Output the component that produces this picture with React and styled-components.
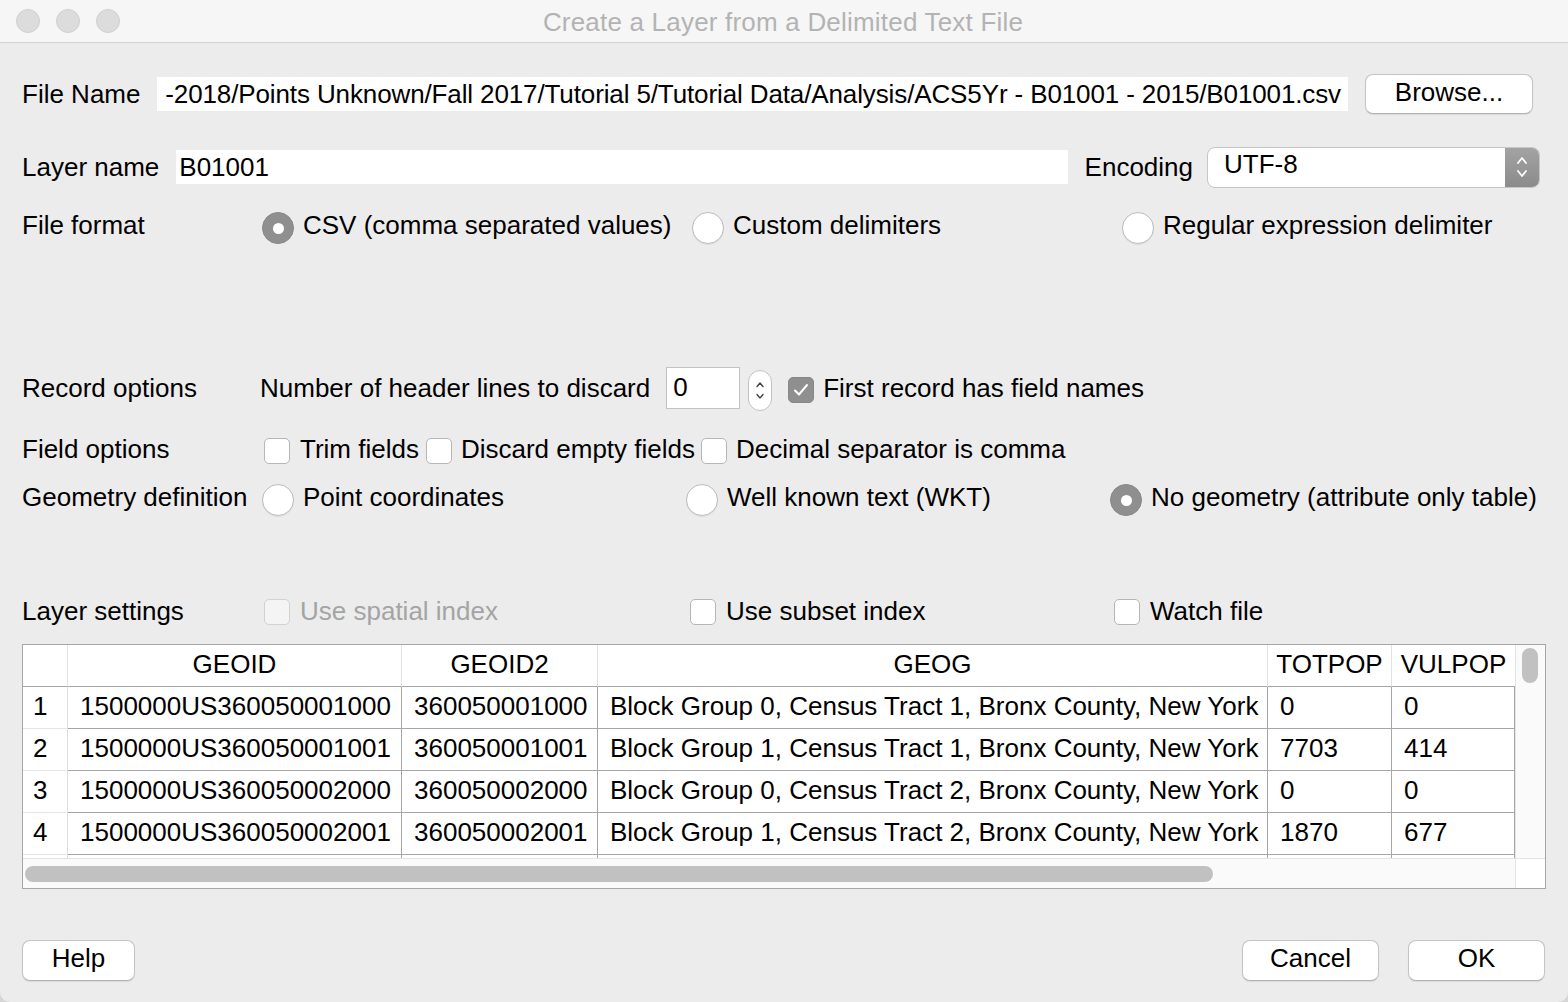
import React from "react";
import styled, { createGlobalStyle } from "styled-components";

const GlobalStyle = createGlobalStyle`
  html, body {
    margin: 0;
    padding: 0;
    background: #d6d6d6;
  }
  body {
    font-family: "Liberation Sans", Arial, sans-serif;
    font-size: 26px;
    color: #000;
  }
  * {
    box-sizing: border-box;
  }
`;

const Window = styled.div`
  width: 1568px;
  height: 1002px;
  background: #ececec;
  display: flex;
  flex-direction: column;
  border-radius: 0 0 10px 10px;
  overflow: hidden;
`;

const TitleBar = styled.div`
  height: 43px;
  flex-shrink: 0;
  background: #f6f6f6;
  border-bottom: 1px solid #d2d2d2;
  display: grid;
  grid-template-columns: 1fr auto 1fr;
  align-items: center;
`;
const Lights = styled.div`
  display: flex;
  gap: 16px;
  padding-left: 16px;
`;
const Light = styled.span`
  width: 24px;
  height: 24px;
  border-radius: 50%;
  background: #dcdcdc;
  border: 1px solid #d0d0d0;
`;
const Title = styled.div`
  color: #b3b3b3;
  line-height: 30px;
  letter-spacing: 0.2px;
  padding: 2px 2px 0 0;
`;

const Content = styled.div`
  padding: 31px 22px 0;
  display: flex;
  flex-direction: column;
`;

const Row = styled.div`
  display: flex;
  align-items: center;
  height: ${(p) => p.$h}px;
  margin-top: ${(p) => p.$mt || 0}px;
  gap: ${(p) => p.$gap || 0}px;
  white-space: nowrap;
  flex-shrink: 0;
`;

const Label = styled.span`
  flex-shrink: 0;
  width: ${(p) => (p.$w ? `${p.$w}px` : "auto")};
  line-height: 30px;
`;

const TextField = styled.div`
  flex: 1;
  min-width: 0;
  height: 34px;
  background: #fff;
  display: flex;
  align-items: center;
  justify-content: ${(p) => (p.$tail ? "flex-end" : "flex-start")};
  padding: ${(p) => (p.$tail ? "0 7px 0 0" : "0 0 0 3px")};
  letter-spacing: ${(p) => (p.$tail ? "-0.12px" : "normal")};
  overflow: hidden;
  white-space: nowrap;
`;

const PushButton = styled.button`
  width: ${(p) => p.$w}px;
  height: ${(p) => p.$h || 41}px;
  flex-shrink: 0;
  background: #fff;
  border: 1px solid #c4c4c4;
  border-bottom-color: #b2b2b2;
  border-radius: 8px;
  box-shadow: 0 1px 1px rgba(0, 0, 0, 0.08);
  font-family: inherit;
  font-size: 26px;
  color: #000;
  padding: 0 0 4px;
  margin-right: ${(p) => p.$mr || 0}px;
`;

const Combo = styled.div`
  width: 333px;
  height: 41px;
  flex-shrink: 0;
  display: flex;
  background: #fff;
  border: 1px solid #c6c6c6;
  border-radius: 8px;
  margin: 0 6px 0 -3px;
  overflow: hidden;
`;
const ComboText = styled.div`
  flex: 1;
  padding: 0 0 5px 16px;
  display: flex;
  align-items: center;
`;
const ComboArrow = styled.div`
  width: 34px;
  background: linear-gradient(#a3a3a3, #8b8b8b);
  display: flex;
  align-items: center;
  justify-content: center;
`;

const OptionGrid = styled.div`
  flex: 1;
  display: grid;
  grid-template-columns: ${(p) => p.$cols};
  align-items: center;
`;

const Option = styled.div`
  display: flex;
  align-items: center;
  gap: ${(p) => p.$gap || 9}px;
  margin-left: ${(p) => p.$ml || 0}px;
  margin-right: ${(p) => p.$mr || 0}px;
`;

const Radio = styled.span`
  width: 32px;
  height: 32px;
  flex-shrink: 0;
  margin-top: 6px;
  border-radius: 50%;
  background: ${(p) => (p.$on ? "#8f8f8f" : "#fff")};
  border: 1px solid ${(p) => (p.$on ? "#888" : "#bcbcbc")};
  box-shadow: ${(p) => (p.$on ? "none" : "0 1px 1px rgba(0,0,0,0.06)")};
  display: flex;
  align-items: center;
  justify-content: center;
  &::after {
    content: "";
    display: ${(p) => (p.$on ? "block" : "none")};
    width: 11px;
    height: 11px;
    border-radius: 50%;
    background: #fff;
  }
`;

const Box = styled.span`
  width: 26px;
  height: 26px;
  flex-shrink: 0;
  margin-top: ${(p) => p.$mt || 0}px;
  border-radius: 5px;
  background: ${(p) => (p.$on ? "#8f8f8f" : p.$off ? "#f4f4f4" : "#fff")};
  border: 1px solid ${(p) => (p.$on ? "#888" : p.$off ? "#d2d2d2" : "#b6b6b6")};
  display: flex;
  align-items: center;
  justify-content: center;
`;

const Text = styled.span`
  line-height: 30px;
  color: ${(p) => (p.$muted ? "#a4a4a4" : "#000")};
`;

const SpinBox = styled.div`
  width: 74px;
  height: 42px;
  flex-shrink: 0;
  background: #fff;
  border: 1px solid #c3c3c3;
  display: flex;
  align-items: center;
  padding: 0 0 2px 6px;
`;
const Stepper = styled.div`
  width: 24px;
  height: 41px;
  flex-shrink: 0;
  margin: 4px 0 0 -8px;
  border: 1px solid #c3c3c3;
  border-radius: 12px;
  background: #fff;
  display: flex;
  flex-direction: column;
  align-items: center;
  justify-content: center;
  gap: 5px;
`;

const Table = styled.div`
  margin-top: 18px;
  height: 245px;
  flex-shrink: 0;
  border: 1px solid #a6a6a6;
  background: #fff;
  display: flex;
  flex-direction: column;
`;
const TableTop = styled.div`
  height: 213px;
  display: flex;
  overflow: hidden;
`;
const GridArea = styled.div`
  width: 1492px;
  flex-shrink: 0;
  overflow: hidden;
`;
const GridRow = styled.div`
  display: flex;
  height: 42px;
`;
const HeadCell = styled.div`
  width: ${(p) => p.$w}px;
  flex-shrink: 0;
  height: 42px;
  display: flex;
  align-items: center;
  justify-content: center;
  border-bottom: 1px solid #a6a6a6;
  border-right: 1px solid #e2e2e2;
  padding-bottom: 2px;
  white-space: nowrap;
  &:last-child {
    border-right: none;
  }
`;
const Cell = styled.div`
  width: ${(p) => p.$w}px;
  flex-shrink: 0;
  height: 42px;
  display: flex;
  align-items: center;
  padding: 0 0 2px ${(p) => (p.$num ? 10 : 12)}px;
  border-bottom: 1px solid ${(p) => (p.$num ? "#e6e6e6" : "#a6a6a6")};
  border-right: 1px solid ${(p) => (p.$num ? "#dedede" : "#a6a6a6")};
  white-space: nowrap;
  overflow: hidden;
`;
const VScroll = styled.div`
  flex: 1;
  background: #fafafa;
  border-left: 1px solid #e4e4e4;
  padding: 3px 0 0 6px;
`;
const VThumb = styled.div`
  width: 16px;
  height: 35px;
  border-radius: 8px;
  background: #c1c1c1;
`;
const TableBottom = styled.div`
  height: 30px;
  display: flex;
  border-top: 1px solid #e3e3e3;
`;
const HScroll = styled.div`
  width: 1492px;
  flex-shrink: 0;
  background: #fafafa;
  padding: 7px 0 0 2px;
`;
const HThumb = styled.div`
  width: 1188px;
  height: 16px;
  border-radius: 8px;
  background: #c1c1c1;
`;
const Corner = styled.div`
  flex: 1;
  background: #fff;
  border-left: 1px solid #e4e4e4;
`;

const ButtonBar = styled.div`
  margin-top: 51px;
  display: flex;
  align-items: center;
  gap: 29px;
`;
const Spacer = styled.div`
  flex: 1;
`;

const Check = () => (
  <svg width="16" height="14" viewBox="0 0 16 14">
    <path d="M2 7.5 L6 11.5 L14 2" fill="none" stroke="#fff" strokeWidth="2" strokeLinecap="round" strokeLinejoin="round" />
  </svg>
);

const UpDown = () => (
  <svg width="14" height="28" viewBox="0 0 14 28">
    <path d="M3 10 L7 5 L11 10 M3 18 L7 23 L11 18" fill="none" stroke="#fff" strokeWidth="1.8" strokeLinecap="round" strokeLinejoin="round" />
  </svg>
);

const Chevron = ({ up }) => (
  <svg width="10" height="7" viewBox="0 0 10 7">
    <path d={up ? "M2 5.5 L5 2 L8 5.5" : "M2 1.5 L5 5 L8 1.5"} fill="none" stroke="#444" strokeWidth="1.4" strokeLinecap="round" strokeLinejoin="round" />
  </svg>
);

const columns = [
  { w: 45, name: "" },
  { w: 334, name: "GEOID" },
  { w: 196, name: "GEOID2" },
  { w: 670, name: "GEOG" },
  { w: 124, name: "TOTPOP" },
  { w: 123, name: "VULPOP" },
];

const rows = [
  ["1", "1500000US360050001000", "360050001000", "Block Group 0, Census Tract 1, Bronx County, New York", "0", "0"],
  ["2", "1500000US360050001001", "360050001001", "Block Group 1, Census Tract 1, Bronx County, New York", "7703", "414"],
  ["3", "1500000US360050002000", "360050002000", "Block Group 0, Census Tract 2, Bronx County, New York", "0", "0"],
  ["4", "1500000US360050002001", "360050002001", "Block Group 1, Census Tract 2, Bronx County, New York", "1870", "677"],
  ["", "", "", "", "", ""],
];

export default function App() {
  return (
    <>
      <GlobalStyle />
      <Window>
        <TitleBar>
          <Lights>
            <Light />
            <Light />
            <Light />
          </Lights>
          <Title>Create a Layer from a Delimited Text File</Title>
          <div />
        </TitleBar>

        <Content>
          <Row $h={40} $gap={17}>
            <Label>File Name</Label>
            <TextField $tail>
              -2018/Points Unknown/Fall 2017/Tutorial 5/Tutorial Data/Analysis/ACS5Yr - B01001 - 2015/B01001.csv
            </TextField>
            <PushButton $w={168} $h={40} $mr={13}>
              Browse...
            </PushButton>
          </Row>

          <Row $h={42} $mt={32} $gap={17}>
            <Label>Layer name</Label>
            <TextField>B01001</TextField>
            <Label>Encoding</Label>
            <Combo>
              <ComboText>UTF-8</ComboText>
              <ComboArrow>
                <UpDown />
              </ComboArrow>
            </Combo>
          </Row>

          <Row $h={34} $mt={20}>
            <Label $w={238}>File format</Label>
            <OptionGrid $cols="432px 430px 1fr">
              <Option $ml={2}>
                <Radio $on />
                <Text>CSV (comma separated values)</Text>
              </Option>
              <Option>
                <Radio />
                <Text>Custom delimiters</Text>
              </Option>
              <Option>
                <Radio />
                <Text>Regular expression delimiter</Text>
              </Option>
            </OptionGrid>
          </Row>

          <Row $h={44} $mt={124}>
            <Label $w={238}>Record options</Label>
            <Option $gap={16}>
              <Text>Number of header lines to discard</Text>
              <SpinBox>0</SpinBox>
              <Stepper>
                <Chevron up />
                <Chevron />
              </Stepper>
            </Option>
            <Option $ml={16}>
              <Box $on $mt={4}>
                <Check />
              </Box>
              <Text>First record has field names</Text>
            </Option>
          </Row>

          <Row $h={32} $mt={23}>
            <Label $w={238}>Field options</Label>
            <Option $gap={10} $ml={4} $mr={7}>
              <Box $mt={4} />
              <Text>Trim fields</Text>
            </Option>
            <Option $mr={6}>
              <Box $mt={4} />
              <Text>Discard empty fields</Text>
            </Option>
            <Option>
              <Box $mt={4} />
              <Text>Decimal separator is comma</Text>
            </Option>
          </Row>

          <Row $h={34} $mt={15}>
            <Label $w={238}>Geometry definition</Label>
            <OptionGrid $cols="426px 424px 1fr">
              <Option $ml={2}>
                <Radio />
                <Text>Point coordinates</Text>
              </Option>
              <Option>
                <Radio />
                <Text>Well known text (WKT)</Text>
              </Option>
              <Option>
                <Radio $on />
                <Text>No geometry (attribute only table)</Text>
              </Option>
            </OptionGrid>
          </Row>

          <Row $h={30} $mt={82}>
            <Label $w={238}>Layer settings</Label>
            <OptionGrid $cols="426px 424px 1fr">
              <Option $gap={10} $ml={4}>
                <Box $off $mt={2} />
                <Text $muted>Use spatial index</Text>
              </Option>
              <Option $gap={10} $ml={4}>
                <Box $mt={2} />
                <Text>Use subset index</Text>
              </Option>
              <Option $gap={10} $ml={4}>
                <Box $mt={2} />
                <Text>Watch file</Text>
              </Option>
            </OptionGrid>
          </Row>

          <Table>
            <TableTop>
              <GridArea>
                <GridRow>
                  {columns.map((c, i) => (
                    <HeadCell key={i} $w={c.w}>
                      {c.name}
                    </HeadCell>
                  ))}
                </GridRow>
                {rows.map((r, ri) => (
                  <GridRow key={ri}>
                    {r.map((v, ci) => (
                      <Cell key={ci} $w={columns[ci].w} $num={ci === 0}>
                        {v}
                      </Cell>
                    ))}
                  </GridRow>
                ))}
              </GridArea>
              <VScroll>
                <VThumb />
              </VScroll>
            </TableTop>
            <TableBottom>
              <HScroll>
                <HThumb />
              </HScroll>
              <Corner />
            </TableBottom>
          </Table>

          <ButtonBar>
            <PushButton $w={113}>Help</PushButton>
            <Spacer />
            <PushButton $w={137}>Cancel</PushButton>
            <PushButton $w={137} $mr={1}>
              OK
            </PushButton>
          </ButtonBar>
        </Content>
      </Window>
    </>
  );
}
